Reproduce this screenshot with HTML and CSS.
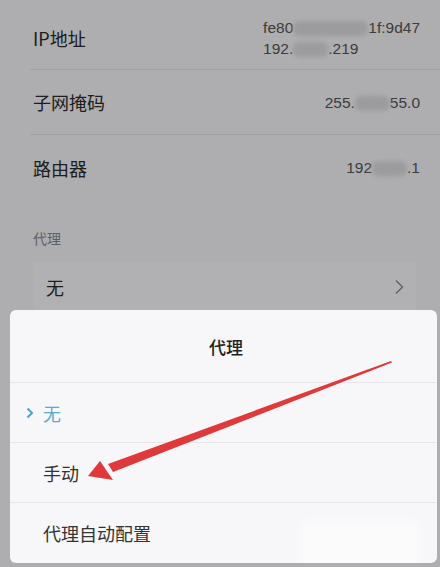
FILE: index.html
```html
<!DOCTYPE html>
<html lang="zh">

<head>
  <meta charset="UTF-8">
  <meta name="viewport" content="width=device-width, initial-scale=1.0">
  <title>代理</title>
  <link rel="stylesheet" href="styles.css">
</head>

<body>

  <div class="screen">

    <ul class="info">
      <li class="info-row info-row-ip">
        <span class="info-name">IP地址</span>
        <span class="info-value">
          <span>fe80<i class="blur blur-wide"></i>1f:9d47</span>
          <span>192.<i class="blur"></i>.219</span>
        </span>
      </li>
      <li class="info-row">
        <span class="info-name">子网掩码</span>
        <span class="info-value"><span>255.<i class="blur"></i>55.0</span></span>
      </li>
      <li class="info-row info-row-last">
        <span class="info-name">路由器</span>
        <span class="info-value"><span>192<i class="blur"></i>.1</span></span>
      </li>
    </ul>

    <div class="section">
      <h3 class="section-title">代理</h3>
      <div class="select">
        <span>无</span>
        <svg width="10" height="16" viewBox="0 0 10 16">
          <path d="M2 1.5 L8.5 8 L2 14.5" fill="none" stroke="#888" stroke-width="1.4" />
        </svg>
      </div>
    </div>

    <div class="mask"></div>

    <div class="sheet">
      <h2 class="sheet-title">代理</h2>
      <ul class="options">
        <li class="active">
          <svg class="check" width="8" height="12" viewBox="0 0 8 12">
            <path d="M1.5 1.5 L6 6 L1.5 10.5" fill="none" stroke="#4fa3c4" stroke-width="2" />
          </svg>
          无
        </li>
        <li>手动</li>
        <li>代理自动配置</li>
      </ul>
      <div class="smudge"></div>
    </div>

    <svg class="arrow" width="440" height="567" viewBox="0 0 440 567">
      <polygon points="391,361 392,362.5 113,472 108,464" fill="#e0393c" />
      <polygon points="88,476 100,461 113,480" fill="#e0393c" />
    </svg>

  </div>

</body>

</html>
```

FILE: styles.css
```css
* {
  margin: 0;
  padding: 0;
  list-style: none;
  box-sizing: border-box;
}

body {
  font-family: "Noto Sans CJK SC", "Noto Sans", sans-serif;
  color: #2b2b2b;
}

.screen {
  width: 440px;
  height: 567px;
  position: relative;
  overflow: hidden;
  background: #f6f5f8;
}

.info {
  padding-top: 7px;
}

.info-row {
  height: 65px;
  margin-left: 30px;
  padding: 0 20px 0 3px;
  display: flex;
  align-items: center;
  justify-content: space-between;
  border-bottom: 1px solid #e3e3e6;
}

.info-row-ip {
  height: 63px;
}

.info-row-last {
  border-bottom: 0;
}

.info-name {
  font-size: 18px;
}

.info-value {
  display: flex;
  flex-direction: column;
  font-family: "Liberation Sans", sans-serif;
  font-size: 15.5px;
  line-height: 21px;
  color: #555;
}

.info-value .blur {
  display: inline-block;
  width: 35px;
  height: 15px;
  vertical-align: middle;
  background: #dcdcdf;
  border-radius: 6px;
  filter: blur(2px);
}

.info-value .blur-wide {
  width: 75px;
}

.section {
  padding: 28px 24px 0 33px;
}

.section-title {
  font-size: 14px;
  font-weight: normal;
  color: #888;
  height: 34px;
}

.select {
  height: 50px;
  padding: 0 12px 0 13px;
  display: flex;
  align-items: center;
  justify-content: space-between;
  background: #fafafc;
  border-radius: 4px;
  font-size: 18px;
}

.mask {
  position: absolute;
  inset: 0;
  background: rgba(0, 0, 0, .29);
}

.sheet {
  position: absolute;
  left: 10px;
  right: 3px;
  top: 310px;
  bottom: 4px;
  background: #f7f6f9;
  border-radius: 6px;
  overflow: hidden;
}

.sheet-title {
  height: 73px;
  display: flex;
  align-items: center;
  justify-content: center;
  font-size: 17px;
  font-weight: 500;
  color: #222;
  padding-left: 5px;
  border-bottom: 1px solid #e6e6ea;
}

.options li {
  height: 60px;
  padding-left: 33px;
  display: flex;
  align-items: center;
  font-size: 18px;
  color: #333;
  border-bottom: 1px solid #e6e6ea;
}

.options li:last-child {
  border-bottom: 0;
}

.options li.active {
  color: #5aaac8;
  position: relative;
}

.options .check {
  position: absolute;
  left: 16px;
  top: 24px;
}

.smudge {
  position: absolute;
  left: 290px;
  top: 210px;
  width: 120px;
  height: 60px;
  background: #fbfbfc;
  filter: blur(4px);
}

.arrow {
  position: absolute;
  left: 0;
  top: 0;
}
```
